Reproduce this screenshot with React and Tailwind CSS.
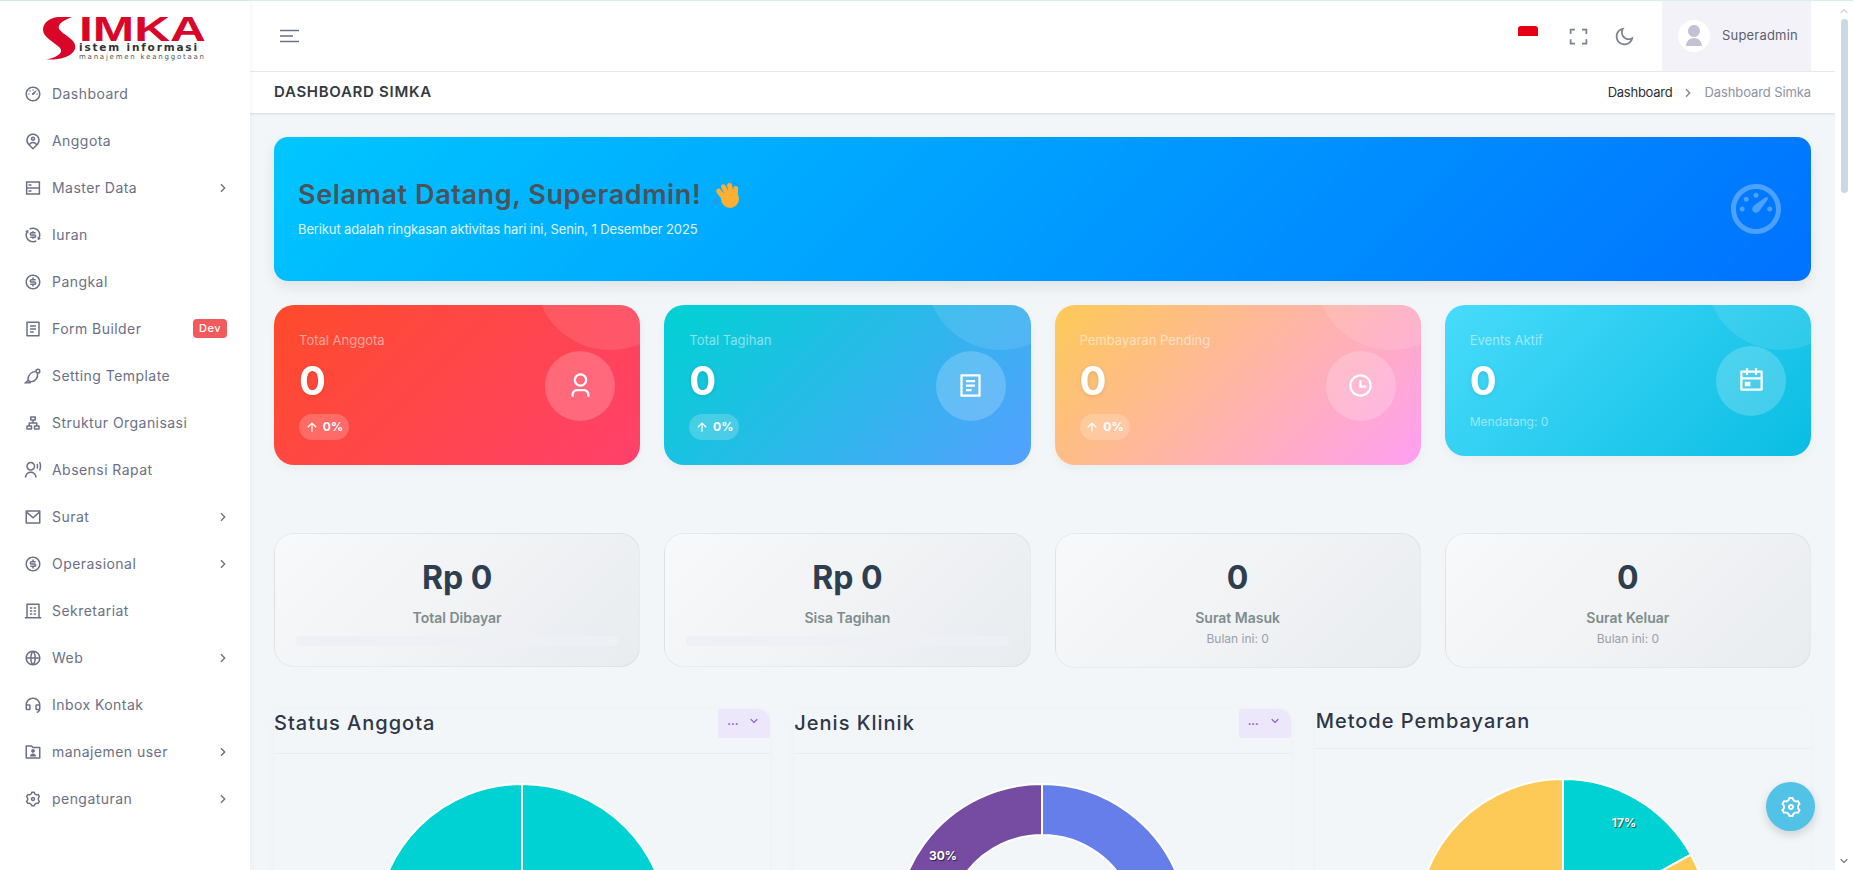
import React from "react";
import {
  RiDashboard3Line, RiMapPinUserLine, RiExchangeDollarLine, RiMoneyDollarCircleLine,
  RiFileList2Line, RiOrganizationChart, RiUserVoiceLine, RiMailLine, RiBuilding4Line, RiGlobalLine,
  RiCustomerServiceLine, RiFolderUserLine, RiSettings3Line, RiArrowRightSLine, RiFullscreenLine, RiMoonLine,
  RiUser3Line, RiTimeLine, RiCalendarEventLine, RiArrowUpLine, RiArrowDownSLine, RiArrowUpSLine, RiUserFill,
} from "react-icons/ri";

function MasterIcon({ size, className }) {
  return (
    <svg width={size} height={size} viewBox="0 0 24 24" className={className} fill="none" stroke="currentColor" strokeWidth="2">
      <rect x="3.5" y="4" width="17" height="16" />
      <path d="M3.5 12H20.5" />
      <path d="M6 8H10M6 16H10" />
    </svg>
  );
}

function TemplateIcon({ size, className }) {
  return (
    <svg width={size} height={size} viewBox="0 0 24 24" className={className} fill="none" stroke="currentColor" strokeWidth="2">
      <path d="M18 9C19 14 15 19 10 19.5C7 19.8 5 18 5.5 15C6.2 10.5 10 6.5 15 6" />
      <circle cx="18.5" cy="5.5" r="2.5" />
      <path d="M6 17L2 21H9" />
    </svg>
  );
}

const menu = [
  [RiDashboard3Line, "Dashboard"],
  [RiMapPinUserLine, "Anggota"],
  [MasterIcon, "Master Data", true],
  [RiExchangeDollarLine, "Iuran"],
  [RiMoneyDollarCircleLine, "Pangkal"],
  [RiFileList2Line, "Form Builder", false, "Dev"],
  [TemplateIcon, "Setting Template"],
  [RiOrganizationChart, "Struktur Organisasi"],
  [RiUserVoiceLine, "Absensi Rapat"],
  [RiMailLine, "Surat", true],
  [RiMoneyDollarCircleLine, "Operasional", true],
  [RiBuilding4Line, "Sekretariat"],
  [RiGlobalLine, "Web", true],
  [RiCustomerServiceLine, "Inbox Kontak"],
  [RiFolderUserLine, "manajemen user", true],
  [RiSettings3Line, "pengaturan", true],
];

function Logo() {
  return (
    <svg width="170" height="58" viewBox="0 -8 170 58" className="block">
      <path d="M30 2 L16 2 C7 3 1 8 1 15 C1 22 12 27 18 33 C22 38 14 43 4 44.5 C18 45 30 42 33 34 C36 25 21 20 17 14 C15 9 22 5 30 2 Z" fill="#d9062a" />
      <text x="37" y="26" fontFamily="'Liberation Sans',sans-serif" fontWeight="700" fontSize="35" fill="#d9062a" textLength="127" lengthAdjust="spacingAndGlyphs">IMKA</text>
      <text x="37" y="36" fontFamily="'DejaVu Sans',sans-serif" fontWeight="700" fontSize="10.5" fill="#333" textLength="118" lengthAdjust="spacing">istem informasi</text>
      <text x="37" y="44" fontFamily="'DejaVu Sans',sans-serif" fontSize="7" fill="#555" textLength="125" lengthAdjust="spacing">manajemen keanggotaan</text>
    </svg>
  );
}

function Sidebar() {
  return (
    <aside className="w-[250px] shrink-0 h-full bg-white shadow-[0_0_6px_rgba(0,0,0,0.06)] z-10 font-[Inter,sans-serif]">
      <div className="h-[69px] pl-[42px] pt-[6px]"><Logo /></div>
      <nav>
        {menu.map(([Icon, label, arrow, badge]) => (
          <div key={label} className="h-[47px] flex items-center pl-[24px] pr-[23px] text-[#6b7086] text-[14px] tracking-[0.45px]">
            <Icon size={18} className="shrink-0" />
            <span className="ml-[10px] flex-1">{label}</span>
            {arrow && <RiArrowRightSLine size={16} className="mr-[-4px]" />}
            {badge && <span className="w-[34px] h-[19px] rounded-[4px] bg-[#f15b5d] text-white text-[11px] font-medium flex items-center justify-center">{badge}</span>}
          </div>
        ))}
      </nav>
    </aside>
  );
}

function TopBar() {
  return (
    <header className="h-[71px] bg-white border-b border-[#e9ebef] flex items-center pl-[29px] pr-[24px]">
      <svg width="22" height="16" viewBox="0 0 22 16" fill="none" stroke="#6c7083" strokeWidth="1.6">
        <path d="M1 2.5H20M1 8H14M1 13.5H20" />
      </svg>
      <div className="flex-1" />
      <div className="w-[20px] h-[10px] rounded-t-[3px] bg-[#e60012] mt-[-10px]" />
      <RiFullscreenLine size={21} className="ml-[30px] text-[#7d8195]" />
      <RiMoonLine size={21} className="ml-[25px] text-[#7d8195]" />
      <div className="ml-[27px] w-[149px] h-[70px] bg-[#f3f2f9] flex items-center pl-[16px]">
        <div className="w-[32px] h-[32px] rounded-full bg-white flex items-center justify-center overflow-hidden">
          <RiUserFill size={24} className="text-[#c4c1d6]" />
        </div>
        <span className="ml-[12px] text-[13px] text-[#5c5f70] font-[Inter,sans-serif] tracking-[0.2px]">Superadmin</span>
      </div>
    </header>
  );
}

function Crumb() {
  return (
    <div className="h-[41px] bg-white shadow-[0_1px_2px_rgba(0,0,0,0.12)] flex items-center justify-between px-[24px] relative">
      <h1 className="font-[Inter,sans-serif] font-semibold text-[15px] text-[#343a40] tracking-[0.7px]">DASHBOARD SIMKA</h1>
      <div className="flex items-center text-[13px] font-[Inter,sans-serif]">
        <span className="text-[#2b2d3a] tracking-[-0.25px]">Dashboard</span>
        <RiArrowRightSLine size={16} className="mx-[8px] text-[#80838f]" />
        <span className="text-[#8f92a3] tracking-[-0.1px]">Dashboard Simka</span>
      </div>
    </div>
  );
}

function Wave() {
  return (
    <svg width="30" height="28" viewBox="0 0 30 28" className="ml-[12px]">
      <g stroke="#4a7fd0" strokeWidth="1" fill="none"><path d="M3 17c0 3 2 5 3 6M1 19c0 2 1 4 2 5M20 2c2 0 4 1 5 3" /></g>
      <g fill="#fbb034">
        <rect x="6" y="7" width="5" height="15" rx="2.5" transform="rotate(-38 8 14)" />
        <rect x="10" y="3" width="5" height="15" rx="2.5" transform="rotate(-26 12 10)" />
        <rect x="15" y="2" width="5" height="15" rx="2.5" transform="rotate(-12 17 9)" />
        <rect x="20" y="5" width="5" height="14" rx="2.5" transform="rotate(2 22 12)" />
        <ellipse cx="17" cy="18" rx="9" ry="9" />
      </g>
    </svg>
  );
}

function Hero() {
  return (
    <section className="h-[144px] rounded-[14px] bg-[linear-gradient(135deg,#00c6ff,#0072ff)] shadow-[0_6px_14px_rgba(0,0,0,0.08)] flex items-center justify-between pl-[24px] pr-[25px]">
      <div>
        <div className="flex items-center h-[34px]">
          <h2 className="font-[Inter,sans-serif] font-semibold text-[27px] tracking-[0.6px] text-[#4a525c]">Selamat Datang, Superadmin!</h2>
          <Wave />
        </div>
        <p className="mt-[8px] text-[13px] tracking-[-0.12px] text-white/85 font-[Inter,sans-serif]">Berikut adalah ringkasan aktivitas hari ini, Senin, 1 Desember 2025</p>
      </div>
      <RiDashboard3Line size={60} className="text-white/30" />
    </section>
  );
}

function StatCard({ gradient, label, Icon, foot, tallBottom }) {
  return (
    <div className={`relative overflow-hidden rounded-[20px] flex items-center justify-between pl-[25px] pr-[25px] pt-[26px] text-white shadow-[0_4px_10px_rgba(0,0,0,0.04)] ${tallBottom ? "pb-[26px]" : "pb-[25px]"} ${gradient}`}>
      <div className="absolute w-[150px] h-[150px] rounded-full bg-white/10 right-[-45px] top-[-105px]" />
      <div>
        <div className="text-[13px] text-white/50 h-[18px] leading-[18px] font-[Inter,sans-serif]">{label}</div>
        <div className="mt-[8px] text-[40px] leading-[48px] font-bold font-[Inter,sans-serif] drop-shadow-[0_1px_2px_rgba(0,0,0,0.1)]">0</div>
        {foot}
      </div>
      <div className="relative w-[70px] h-[70px] rounded-full bg-white/20 flex items-center justify-center">
        <Icon size={27} />
      </div>
    </div>
  );
}

const Badge = () => (
  <div className="mt-[9px] w-[50px] h-[26px] rounded-[13px] bg-white/20 flex items-center justify-center text-[12px] font-bold font-[Inter,sans-serif] gap-[4px]">
    <RiArrowUpLine size={14} />0%
  </div>
);

function MiniCard({ value, label, sub, bar, tall }) {
  return (
    <div className={`rounded-[20px] border border-black/5 bg-[linear-gradient(135deg,#f8f9fa,#e9ecef)] flex flex-col items-center pt-[20px] ${tall ? "h-[135px]" : "h-[134px]"}`}>
      <div className="text-[32px] leading-[48px] font-bold text-[#2c3e50] font-[Inter,sans-serif]">{value}</div>
      <div className="mt-[6px] text-[14px] leading-[20px] font-semibold text-[#7f8c8d] font-[Inter,sans-serif]">{label}</div>
      {sub && <div className="mt-[3px] text-[12px] leading-[16px] text-[#9aa0aa] font-[Inter,sans-serif]">{sub}</div>}
      {bar && <div className="mt-[8px] self-stretch mx-[21px] h-[10px] rounded-[4px] bg-[#eef0f6]" />}
    </div>
  );
}

function slice(cx, cy, r, ri, a0, a1) {
  const pt = (rad, a) => [cx + rad * Math.sin(a * 2 * Math.PI), cy - rad * Math.cos(a * 2 * Math.PI)];
  const large = a1 - a0 > 0.5 ? 1 : 0;
  const [x0, y0] = pt(r, a0);
  const [x1, y1] = pt(r, a1);
  if (!ri) return `M${cx} ${cy}L${x0} ${y0}A${r} ${r} 0 ${large} 1 ${x1} ${y1}Z`;
  const [x2, y2] = pt(ri, a1);
  const [x3, y3] = pt(ri, a0);
  return `M${x0} ${y0}A${r} ${r} 0 ${large} 1 ${x1} ${y1}L${x2} ${y2}A${ri} ${ri} 0 ${large} 0 ${x3} ${y3}Z`;
}

function Pie({ slices, inner = 0, labels = [] }) {
  const cx = 150, cy = 148, r = 146;
  return (
    <svg width="300" height="300" viewBox="0 0 300 300" className="block">
      {slices.map(([a0, a1, c]) => (
        <path key={a0} d={slice(cx, cy, r, inner, a0, a1)} fill={c} stroke="#fff" strokeWidth="2" />
      ))}
      {labels.map(([x, y, t]) => (
        <text key={t} x={x} y={y} textAnchor="middle" fontFamily="Inter,sans-serif" fontWeight="700" fontSize="12" fill="#fff" style={{ textShadow: "1px 1px 1px rgba(0,0,0,.6)" }}>{t}</text>
      ))}
    </svg>
  );
}

function ChartCard({ title, menuBtn, children }) {
  return (
    <div className="h-[400px] rounded-[12px] shadow-[0_1px_6px_rgba(0,0,0,0.03)] bg-[#f3f6f9]">
      <div className={`flex justify-between items-start border-b border-[#e9edf2] ${menuBtn ? "h-[45px]" : "h-[40px]"}`}>
        <h3 className={`font-[Inter,sans-serif] font-medium text-[20px] leading-[24px] tracking-[1px] text-[#2d3748] ${menuBtn ? "pt-[2px]" : "pl-[1px]"}`}>{title}</h3>
        {menuBtn && (
          <div className="w-[52px] h-[29px] bg-[#ede7fb] rounded-[2px] rounded-tr-[12px] flex items-center justify-center gap-[9px] pb-[5px] text-[#7c4ddb]">
            <span className="text-[11px] leading-[11px] font-bold font-[Inter,sans-serif]">...</span>
            <RiArrowDownSLine size={14} />
          </div>
        )}
      </div>
      <div className="flex justify-center pt-[28px]">{children}</div>
    </div>
  );
}

function Scrollbar() {
  return (
    <div className="w-[18px] shrink-0 h-full bg-white flex flex-col items-center relative">
      <RiArrowUpSLine size={14} className="text-[#c5ced6] mt-[3px]" />
      <div className="w-[7px] h-[174px] mt-[1px] rounded-[4px] bg-[#cbd9e5]" />
      <div className="flex-1" />
      <RiArrowDownSLine size={14} className="text-[#5d6470] mb-[2px]" />
    </div>
  );
}

export default function App() {
  return (
    <div className="h-[870px] w-full overflow-hidden flex flex-col bg-[#f3f6f9] relative">
      <div className="h-px bg-[#d5f2e6] shrink-0" />
      <div className="flex flex-1 min-h-0">
        <Sidebar />
        <main className="flex-1 min-w-0 overflow-hidden">
          <TopBar />
          <Crumb />
          <div className="px-[24px] pt-[24px]">
            <Hero />
            <div className="grid grid-cols-4 gap-x-[24px] items-start mt-[24px]">
              <StatCard gradient="bg-[linear-gradient(135deg,#ff4b2b,#ff416c)]" label="Total Anggota" Icon={RiUser3Line} foot={<Badge />} />
              <StatCard gradient="bg-[linear-gradient(135deg,#00d2d3,#54a0ff)]" label="Total Tagihan" Icon={RiFileList2Line} foot={<Badge />} />
              <StatCard gradient="bg-[linear-gradient(135deg,#feca57,#ff9ff3)]" label="Pembayaran Pending" Icon={RiTimeLine} foot={<Badge />} />
              <StatCard tallBottom gradient="bg-[linear-gradient(135deg,#48dbfb,#0abde3)]" label="Events Aktif" Icon={RiCalendarEventLine} foot={<div className="mt-[9px] text-[12px] leading-[16px] text-white/50 font-[Inter,sans-serif]">Mendatang: 0</div>} />
            </div>
            <div className="grid grid-cols-4 gap-x-[24px] items-start mt-[68px]">
              <MiniCard value="Rp 0" label="Total Dibayar" bar />
              <MiniCard value="Rp 0" label="Sisa Tagihan" bar />
              <MiniCard value="0" label="Surat Masuk" sub="Bulan ini: 0" tall />
              <MiniCard value="0" label="Surat Keluar" sub="Bulan ini: 0" tall />
            </div>
            <div className="grid grid-cols-3 gap-x-[24px] items-start mt-[41px]">
              <ChartCard title="Status Anggota" menuBtn>
                <Pie slices={[[0, 0.5, "#00d2d3"], [0.5, 1, "#00d2d3"]]} />
              </ChartCard>
              <ChartCard title="Jenis Klinik" menuBtn>
                <Pie inner={95} slices={[[0, 0.4, "#667eea"], [0.4, 0.7, "#e84393"], [0.7, 1, "#764ba2"]]} labels={[[51, 78, "30%"]]} />
              </ChartCard>
              <ChartCard title="Metode Pembayaran">
                <Pie slices={[[0, 0.17, "#00d2d3"], [0.17, 0.5, "#feca57"], [0.5, 1, "#feca57"]]} labels={[[211, 50, "17%"]]} />
              </ChartCard>
            </div>
          </div>
        </main>
        <Scrollbar />
      </div>
      <button className="absolute left-[1766px] top-[782px] w-[49px] h-[49px] rounded-full bg-[#52c2e6] shadow-[0_4px_10px_rgba(0,0,0,0.15)] flex items-center justify-center text-white">
        <RiSettings3Line size={24} />
      </button>
    </div>
  );
}
